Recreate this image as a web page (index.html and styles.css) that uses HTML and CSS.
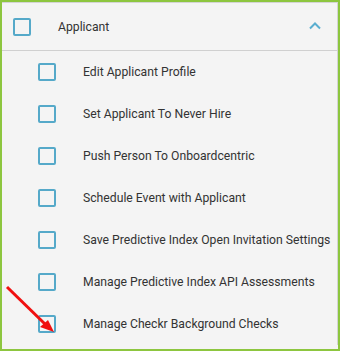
FILE: index.html
```
<!DOCTYPE html>
<html>
<head>
<title>Applicant permissions</title>
<link rel="stylesheet" href="styles.css">
</head>
<body>
<div class="panel">
  <div class="group-head">
    <span class="check"></span>
    <span class="group-title">Applicant</span>
    <svg class="chevron" width="12" height="8" viewBox="0 0 12 8"><path d="M1 6.5 L6 1.5 L11 6.5" fill="none" stroke="#5aaed0" stroke-width="2"/></svg>
  </div>
  <ul class="perms">
    <li><span class="check"></span>Edit Applicant Profile</li>
    <li><span class="check"></span>Set Applicant To Never Hire</li>
    <li><span class="check"></span>Push Person To Onboardcentric</li>
    <li><span class="check"></span>Schedule Event with Applicant</li>
    <li><span class="check"></span>Save Predictive Index Open Invitation Settings</li>
    <li><span class="check"></span>Manage Predictive Index API Assessments</li>
    <li><span class="check"></span>Manage Checkr Background Checks</li>
  </ul>
  <svg class="arrow" width="60" height="60" viewBox="0 0 60 60">
    <line x1="7" y1="7" x2="46" y2="45" stroke="#f01010" stroke-width="3"/>
    <polygon points="54,52 40,47 48,40" fill="#f01010"/>
  </svg>
</div>
</body>
</html>
```
FILE: styles.css
```
/* Permission group panel */

body
{ margin: 0;
  background-color: #f4f4f4;
  font-family: Roboto, "Liberation Sans", sans-serif;
  font-size: 12.2px;
  color: #333333;
}

div.panel
{ position: relative;
  box-sizing: border-box;
  width: 340px;
  height: 351px;
  border: 2px solid #8dc63f;
  background-color: #f4f4f4;
}

div.group-head
{ display: flex;
  align-items: center;
  height: 47px;
  border-top: 1px solid #d4d4d4;
  border-right: 1px solid #d4d4d4;
  border-bottom: 1px solid #d0d0d0;
  padding-left: 11px;
  padding-right: 16px;
}

span.group-title
{ flex: 1;
  margin-left: 27px;
  padding-top: 1px;
}

svg.chevron
{ margin-top: -1px;
}

span.check
{ display: inline-block;
  box-sizing: border-box;
  width: 18px;
  height: 18px;
  border: 2px solid #55a9c9;
  border-radius: 2px;
  flex: none;
}

ul.perms
{ list-style: none;
  margin: 0;
  padding: 0;
  border-right: 1px solid #d4d4d4;
}

ul.perms li
{ display: flex;
  align-items: center;
  height: 42px;
  padding-left: 36px;
  white-space: nowrap;
}

ul.perms li span.check
{ margin-right: 27px;
}

/* Annotation arrow over the last row */

svg.arrow
{ position: absolute;
  left: -2px;
  top: 278px;
}
```
